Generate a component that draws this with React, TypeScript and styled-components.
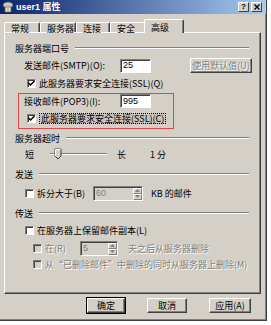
import React from 'react';
import styled, { createGlobalStyle } from 'styled-components';

const FACE = '#d4d0c8';
const SHADOW = '#808080';
const DARK = '#404040';
const FONT = '"Noto Sans CJK SC", "Liberation Sans", sans-serif';

const GlobalStyle = createGlobalStyle`
  html, body { margin: 0; padding: 0; background: #fff; }
  body { font-family: ${FONT}; font-size: 9px; color: #000; line-height: 1; }
`;

const Window = styled.div`
  width: 267px;
  height: 321px;
  box-sizing: border-box;
  background: ${FACE};
  border-right: 1px solid ${DARK};
  border-bottom: 1px solid ${DARK};
  box-shadow: inset -1px -1px 0 ${SHADOW}, 0 2px 0 #c4c4c4, 0 3px 0 #3a6ea5;
  display: flex;
  flex-direction: column;
`;

const TitleBar = styled.div`
  height: 14px;
  display: flex;
  align-items: center;
  padding: 0 4px 0 2px;
  background: linear-gradient(to right, #0a246a, #a6caf0);
  color: #fff;
  font-family: "Liberation Sans", "Noto Sans CJK SC", sans-serif;
  font-weight: bold;
  font-size: 9px;
  gap: 2px;
`;

const TitleText = styled.span`
  flex: 1;
`;

const CaptionButton = styled.div`
  width: 11px;
  height: 10px;
  box-sizing: border-box;
  background: ${FACE};
  border: 1px solid;
  border-color: #fff ${DARK} ${DARK} #fff;
  color: #000;
  display: flex;
  align-items: center;
  justify-content: center;
  font-size: 8px;
  font-weight: bold;
`;

const TabStrip = styled.div`
  margin-top: 5px;
  height: 13px;
  display: flex;
  align-items: flex-end;
  padding-left: 4px;
`;

const Tab = styled.div<{ $active?: boolean; $w: number }>`
  width: ${(p) => p.$w}px;
  height: ${(p) => (p.$active ? 14 : 10)}px;
  box-sizing: border-box;
  background: ${FACE};
  border: 1px solid;
  border-color: #fff ${DARK} transparent #fff;
  border-bottom: none;
  border-radius: 2px 2px 0 0;
  box-shadow: inset -1px 0 0 ${SHADOW};
  padding: ${(p) => (p.$active ? '3px 0 0 6px' : '1px 0 0 6px')};
  margin: ${(p) => (p.$active ? '0 -1px -1px -2px' : '0')};
  position: relative;
  z-index: ${(p) => (p.$active ? 1 : 0)};
  white-space: nowrap;
`;

const Panel = styled.div`
  margin: 0 5px 0 4px;
  height: 262px;
  box-sizing: border-box;
  border: 1px solid;
  border-color: #fff ${DARK} ${DARK} #fff;
  box-shadow: inset -1px -1px 0 ${SHADOW};
  padding: 9px 7px 0 10px;
  display: flex;
  flex-direction: column;
`;

const Row = styled.div<{ $mt?: number; $h: number; $pl?: number }>`
  margin-top: ${(p) => p.$mt ?? 0}px;
  height: ${(p) => p.$h}px;
  padding-left: ${(p) => p.$pl ?? 0}px;
  display: flex;
  align-items: center;
  white-space: nowrap;
`;

const GroupHeader = styled(Row)`
  gap: 6px;
  margin-right: 4px;
`;

const EtchedLine = styled.div`
  flex: 1;
  height: 0;
  border-top: 1px solid ${SHADOW};
  border-bottom: 1px solid #fff;
`;

const Label = styled.span<{ $w?: number; $ml?: number; $disabled?: boolean }>`
  display: inline-block;
  width: ${(p) => (p.$w ? `${p.$w}px` : 'auto')};
  margin-left: ${(p) => p.$ml ?? 0}px;
  color: ${(p) => (p.$disabled ? SHADOW : '#000')};
  text-shadow: ${(p) => (p.$disabled ? '1px 1px 0 #fff' : 'none')};
`;

const Focused = styled.span`
  padding: 1px 2px;
  background: #c8c4bc;
  outline: 1px dotted #000;
  outline-offset: -1px;
`;

const TextBox = styled.div<{ $w: number; $h: number; $ml?: number; $disabled?: boolean }>`
  width: ${(p) => p.$w}px;
  height: ${(p) => p.$h}px;
  margin-left: ${(p) => p.$ml ?? 0}px;
  box-sizing: border-box;
  border: 1px solid;
  border-color: ${SHADOW} #fff #fff ${SHADOW};
  box-shadow: inset 1px 1px 0 ${DARK};
  background: ${(p) => (p.$disabled ? FACE : '#fff')};
  color: ${(p) => (p.$disabled ? SHADOW : '#000')};
  display: flex;
  align-items: center;
  padding-left: 2px;
  font-family: "Liberation Sans", sans-serif;
  font-size: 9px;
`;

const SpinValue = styled.span`
  flex: 1;
`;

const SpinButtons = styled.div`
  width: 9px;
  align-self: stretch;
  display: flex;
  flex-direction: column;
  margin: 1px 0 0 0;
`;

const SpinButton = styled.div`
  flex: 1;
  background: ${FACE};
  border: 1px solid;
  border-color: #fff ${SHADOW} ${SHADOW} #fff;
  display: flex;
  align-items: center;
  justify-content: center;
`;

const Button = styled.div<{ $w: number; $ml?: number; $default?: boolean; $disabled?: boolean }>`
  width: ${(p) => p.$w}px;
  height: 15px;
  margin-left: ${(p) => p.$ml ?? 0}px;
  box-sizing: border-box;
  background: ${FACE};
  border: 1px solid;
  border-color: #fff ${DARK} ${DARK} #fff;
  box-shadow: inset -1px -1px 0 ${SHADOW}${(p) => (p.$default ? ', 0 0 0 1px #000' : '')};
  display: flex;
  align-items: center;
  justify-content: center;
  color: ${(p) => (p.$disabled ? SHADOW : '#000')};
  text-shadow: ${(p) => (p.$disabled ? '1px 1px 0 #fff' : 'none')};
`;

const CheckBox = styled.span<{ $disabled?: boolean }>`
  width: 9px;
  height: 9px;
  box-sizing: border-box;
  flex: none;
  border: 1px solid;
  border-color: ${SHADOW} #fff #fff ${SHADOW};
  box-shadow: inset 1px 1px 0 ${DARK};
  background: ${(p) => (p.$disabled ? FACE : '#fff')};
  margin-right: 3px;
  display: flex;
  align-items: center;
  justify-content: center;
`;

const RedBox = styled.div`
  margin: 4px 0 0 3px;
  width: 156px;
  box-sizing: border-box;
  border: 1px solid #e04848;
  padding: 0 0 4px 0;
  display: flex;
  flex-direction: column;
`;

const ButtonBar = styled.div`
  margin-top: 4px;
  display: flex;
  padding-left: 87px;
`;

const Check = () => (
  <svg width="7" height="7" viewBox="0 0 7 7">
    <path d="M0.5 3 L2.5 5 L6.5 1" stroke="#000" strokeWidth="1.5" fill="none" />
  </svg>
);

const Arrow = ({ up }: { up?: boolean }) => (
  <svg width="5" height="3" viewBox="0 0 5 3">
    <path d={up ? 'M0 3 L2.5 0 L5 3 Z' : 'M0 0 L5 0 L2.5 3 Z'} fill={SHADOW} />
  </svg>
);

const Spin = ({ value, w, ml }: { value: string; w: number; ml?: number }) => (
  <TextBox $w={w} $h={15} $ml={ml} $disabled>
    <SpinValue>{value}</SpinValue>
    <SpinButtons>
      <SpinButton>
        <Arrow up />
      </SpinButton>
      <SpinButton>
        <Arrow />
      </SpinButton>
    </SpinButtons>
  </TextBox>
);

const Slider = () => (
  <svg width="57" height="12" viewBox="0 0 57 12" style={{ marginLeft: 16 }}>
    <line x1="0" y1="5.5" x2="57" y2="5.5" stroke={SHADOW} />
    <line x1="0" y1="6.5" x2="57" y2="6.5" stroke="#fff" />
    <path d="M5 1 H11 V8 L8 11 L5 8 Z" fill={FACE} stroke={DARK} strokeWidth="1" />
    <path d="M5.5 8 V1.5 H10.5" stroke="#fff" fill="none" />
  </svg>
);

const TitleIcon = () => (
  <svg width="12" height="12" viewBox="0 0 12 12">
    <ellipse cx="6" cy="4" rx="5" ry="3" fill="#c8c8c8" stroke="#555" strokeWidth="0.7" />
    <rect x="3" y="6" width="6" height="5" fill="#e8e8e8" stroke="#555" strokeWidth="0.7" />
    <rect x="4.5" y="7.5" width="3" height="2" fill="#d8b040" />
  </svg>
);

const CloseGlyph = () => (
  <svg width="6" height="6" viewBox="0 0 6 6">
    <path d="M0.5 0.5 L5.5 5.5 M5.5 0.5 L0.5 5.5" stroke="#000" strokeWidth="1.4" />
  </svg>
);

const tabs = [
  { name: '常规', w: 36 },
  { name: '服务器', w: 36 },
  { name: '连接', w: 34 },
  { name: '安全', w: 36 },
];

export default function App() {
  return (
    <>
      <GlobalStyle />
      <Window>
        <TitleBar>
          <TitleIcon />
          <TitleText>user1 属性</TitleText>
          <CaptionButton>?</CaptionButton>
          <CaptionButton>
            <CloseGlyph />
          </CaptionButton>
        </TitleBar>
        <TabStrip>
          {tabs.map((t) => (
            <Tab key={t.name} $w={t.w}>
              {t.name}
            </Tab>
          ))}
          <Tab $active $w={40}>
            高级
          </Tab>
        </TabStrip>
        <Panel>
          <GroupHeader $h={12}>
            服务器端口号
            <EtchedLine />
          </GroupHeader>
          <Row $mt={4} $h={15} $pl={9}>
            <Label $w={96}>发送邮件(SMTP)(O):</Label>
            <TextBox $w={31} $h={14}>25</TextBox>
            <Button $w={62} $ml={39} $disabled>
              使用默认值(U)
            </Button>
          </Row>
          <Row $mt={4} $h={12} $pl={12}>
            <CheckBox>
              <Check />
            </CheckBox>
            此服务器要求安全连接(SSL)(Q)
          </Row>
          <RedBox>
            <Row $h={14} $pl={5}>
              <Label $w={96}>接收邮件(POP3)(I):</Label>
              <TextBox $w={31} $h={14}>995</TextBox>
            </Row>
            <Row $mt={4} $h={12} $pl={8}>
              <CheckBox>
                <Check />
              </CheckBox>
              <Focused>此服务器要求安全连接(SSL)(C)</Focused>
            </Row>
          </RedBox>
          <GroupHeader $mt={3} $h={12}>
            服务器超时
            <EtchedLine />
          </GroupHeader>
          <Row $mt={3} $h={14} $pl={10}>
            短
            <Slider />
            <Label $ml={10}>长</Label>
            <Label $ml={24}>1 分</Label>
          </Row>
          <GroupHeader $mt={7} $h={12}>
            发送
            <EtchedLine />
          </GroupHeader>
          <Row $mt={5} $h={16} $pl={10}>
            <CheckBox />
            <Label $w={56}>拆分大于(B)</Label>
            <Spin value="60" w={50} />
            <Label $ml={8}>KB 的邮件</Label>
          </Row>
          <GroupHeader $mt={6} $h={12}>
            传送
            <EtchedLine />
          </GroupHeader>
          <Row $mt={5} $h={12} $pl={10}>
            <CheckBox />
            在服务器上保留邮件副本(L)
          </Row>
          <Row $mt={5} $h={14} $pl={18}>
            <CheckBox $disabled />
            <Label $w={35} $disabled>
              在(R)
            </Label>
            <Spin value="5" w={38} />
            <Label $ml={10} $disabled>
              天之后从服务器删除
            </Label>
          </Row>
          <Row $mt={3} $h={12} $pl={18}>
            <CheckBox $disabled />
            <Label $disabled>从“已删除邮件”中删除的同时从服务器上删除(M)</Label>
          </Row>
        </Panel>
        <ButtonBar>
          <Button $w={38} $default>
            确定
          </Button>
          <Button $w={40} $ml={22}>
            取消
          </Button>
          <Button $w={42} $ml={22}>
            应用(A)
          </Button>
        </ButtonBar>
      </Window>
    </>
  );
}
